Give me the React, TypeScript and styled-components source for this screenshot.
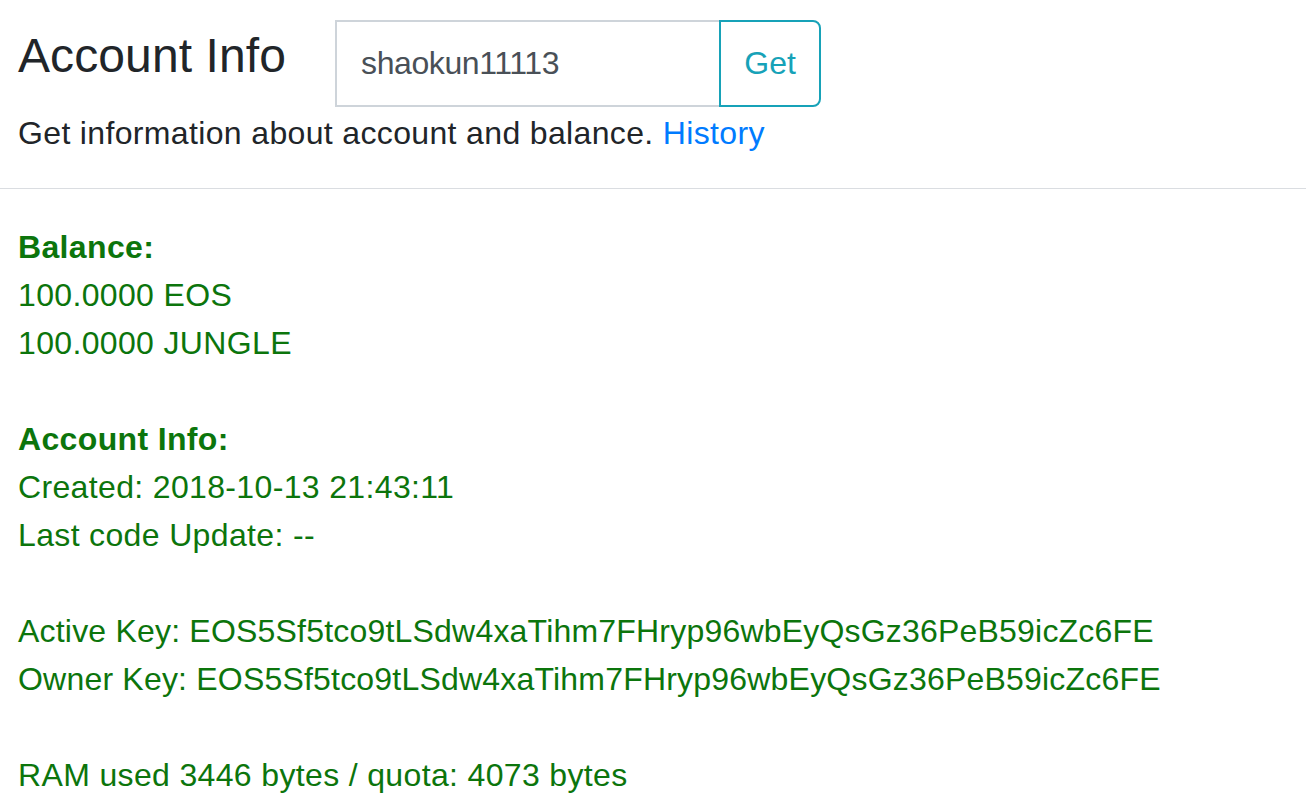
import React from "react";
import styled, { createGlobalStyle } from "styled-components";

const Global = createGlobalStyle`
  html, body { margin: 0; padding: 0; background: #ffffff; }
  body {
    font-family: "Liberation Sans", Arial, sans-serif;
    font-size: 32px;
    line-height: 48px;
    letter-spacing: 0.35px;
    color: #212529;
  }
  * { box-sizing: border-box; }
`;

const Header = styled.header`
  padding: 20px 18px 31px;
  border-bottom: 1px solid #dadde1;
`;

const TitleRow = styled.div`
  display: flex;
  align-items: flex-start;
  gap: 49px;
`;

const Title = styled.h1`
  margin: 0;
  font-size: 48px;
  line-height: 72px;
  font-weight: 400;
  letter-spacing: 0.1px;
  color: #212529;
`;

const InputGroup = styled.div`
  display: flex;
  height: 87px;
`;

const TextInput = styled.input`
  width: 384px;
  height: 100%;
  border: 2px solid #ced4da;
  border-right: none;
  border-radius: 0;
  padding: 0 24px;
  font-family: "Liberation Sans", Arial, sans-serif;
  font-size: 32px;
  letter-spacing: -0.4px;
  color: #495057;
  outline: none;
  background: #fff;
`;

const GetButton = styled.button`
  width: 102px;
  height: 100%;
  border: 2px solid #17a2b8;
  border-radius: 0 8px 8px 0;
  background: #fff;
  color: #17a2b8;
  font-family: "Liberation Sans", Arial, sans-serif;
  font-size: 32px;
  padding: 0;
  cursor: pointer;
`;

const Subtitle = styled.p`
  margin: 2px 0 0;
`;

const Link = styled.a`
  color: #007bff;
  text-decoration: none;
`;

const Content = styled.main`
  padding: 34px 18px 0;
  color: #0c750c;
`;

const Block = styled.div`
  & + & {
    margin-top: 48px;
  }
`;

const Line = styled.div<{ $bold?: boolean; $tight?: boolean }>`
  font-weight: ${(p) => (p.$bold ? 700 : 400)};
  letter-spacing: ${(p) => (p.$tight ? "0.2px" : "inherit")};
  white-space: nowrap;
`;

const KEY = "EOS5Sf5tco9tLSdw4xaTihm7FHryp96wbEyQsGz36PeB59icZc6FE";

export default function App() {
  return (
    <>
      <Global />
      <Header>
        <TitleRow>
          <Title>Account Info</Title>
          <InputGroup>
            <TextInput defaultValue="shaokun11113" />
            <GetButton>Get</GetButton>
          </InputGroup>
        </TitleRow>
        <Subtitle>
          Get information about account and balance. <Link href="#">History</Link>
        </Subtitle>
      </Header>
      <Content>
        <Block>
          <Line $bold>Balance:</Line>
          <Line>100.0000 EOS</Line>
          <Line>100.0000 JUNGLE</Line>
        </Block>
        <Block>
          <Line $bold>Account Info:</Line>
          <Line>Created: 2018-10-13 21:43:11</Line>
          <Line>Last code Update: --</Line>
        </Block>
        <Block>
          <Line $tight>Active Key: {KEY}</Line>
          <Line $tight>Owner Key: {KEY}</Line>
        </Block>
        <Block>
          <Line>RAM used 3446 bytes / quota: 4073 bytes</Line>
        </Block>
      </Content>
    </>
  );
}
